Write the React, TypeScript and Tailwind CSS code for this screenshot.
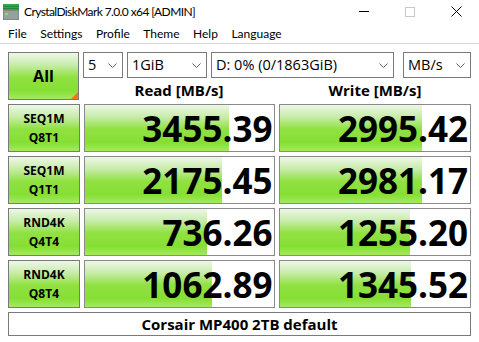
import React from "react";

const rows = [
  { l1: "SEQ1M", l2: "Q8T1", read: "3455.39", rw: 144, write: "2995.42", ww: 142 },
  { l1: "SEQ1M", l2: "Q1T1", read: "2175.45", rw: 137, write: "2981.17", ww: 142 },
  { l1: "RND4K", l2: "Q4T4", read: "736.26", rw: 122, write: "1255.20", ww: 130 },
  { l1: "RND4K", l2: "Q8T4", read: "1062.89", rw: 127, write: "1345.52", ww: 131 },
];

const menu = ["File", "Settings", "Profile", "Theme", "Help", "Language"];

function Chevron() {
  return (
    <svg width="9" height="5" viewBox="0 0 9 5" className="shrink-0">
      <path d="M0.5 0.5 L4.5 4.5 L8.5 0.5" fill="none" stroke="#606060" strokeWidth="1" />
    </svg>
  );
}

function Combo({ value, width }: { value: string; width: string }) {
  return (
    <div
      className={`${width} h-[26px] border border-[#7a7a7a] bg-white flex items-center justify-between pl-[4px] pr-[5px] text-[14.5px] text-black`}
    >
      <span className="leading-none whitespace-nowrap">{value}</span>
      <Chevron />
    </div>
  );
}

function AppIcon() {
  return (
    <svg width="16" height="16" viewBox="0 0 16 16">
      <rect x="0" y="0" width="16" height="6" fill="#2fa84f" />
      <rect x="0" y="2" width="16" height="1" fill="#1f8a3a" />
      <rect x="0" y="4" width="16" height="1" fill="#1f8a3a" />
      <rect x="0" y="6" width="16" height="10" fill="#7d8a86" />
      <rect x="1" y="7" width="14" height="8" fill="#95a19d" />
      <rect x="2" y="9" width="3" height="2" fill="#7fe07a" />
    </svg>
  );
}

const grad =
  "bg-[linear-gradient(to_bottom,#eef7e9_0%,#c4eba3_28%,#90e142_52%,#86df34_82%,#a4ea63_100%)]";

export default function App() {
  return (
    <div className="w-[479px] h-[342px] bg-white text-black overflow-hidden [font-family:'Open_Sans','Noto_Sans',sans-serif]">
      {/* title bar */}
      <div className="h-[23px] flex items-center [font-family:Lato,sans-serif]">
        <div className="ml-[3px] mt-[1px]">
          <AppIcon />
        </div>
        <span className="ml-[5px] text-[12px] tracking-[-0.6px] leading-none">CrystalDiskMark 7.0.0 x64 [ADMIN]</span>
        <div className="ml-auto flex items-center h-full">
          <div className="w-[46px] flex justify-center">
            <div className="w-[10px] h-px bg-black" />
          </div>
          <div className="w-[46px] flex justify-center">
            <div className="w-[10px] h-[10px] border border-[#c8c8c8]" />
          </div>
          <div className="w-[46px] flex justify-center">
            <svg width="11" height="11" viewBox="0 0 11 11">
              <path d="M0.5 0.5 L10.5 10.5 M10.5 0.5 L0.5 10.5" stroke="#000" strokeWidth="1" />
            </svg>
          </div>
        </div>
      </div>

      {/* menu */}
      <div className="h-[21px] flex items-center gap-[13.5px] pl-[8px] pt-[2px] border-b border-[#d6d6d6] text-[12px] leading-none [font-family:Lato,sans-serif]">
        {menu.map((m) => (
          <span key={m}>{m}</span>
        ))}
      </div>

      <div className="px-[8px] pt-[8px] flex flex-col gap-[4px]">
        {/* controls + headers */}
        <div className="flex gap-[4px]">
          <div className={`relative w-[72px] h-[48px] border border-[#7a7a7a] ${grad} flex items-center justify-center`}>
            <span className="text-[16px] font-bold leading-none">All</span>
            <div className="absolute right-0 bottom-0 w-0 h-0 border-l-[7px] border-l-transparent border-b-[7px] border-b-[#f07a10]" />
          </div>
          <div className="flex flex-col">
            <div className="flex h-[26px]">
              <Combo value="5" width="w-[40px]" />
              <div className="ml-[4px]">
                <Combo value="1GiB" width="w-[80px]" />
              </div>
              <div className="ml-[4px]">
                <Combo value="D: 0% (0/1863GiB)" width="w-[183px]" />
              </div>
              <div className="ml-[9px]">
                <Combo value="MB/s" width="w-[68px]" />
              </div>
            </div>
            <div className="flex gap-[4px] h-[22px] items-center">
              <div className="w-[192px] text-center text-[15px] font-bold leading-none pt-[3px]">Read [MB/s]</div>
              <div className="w-[192px] text-center text-[15px] font-bold leading-none pt-[3px]">Write [MB/s]</div>
            </div>
          </div>
        </div>

        {/* result rows */}
        {rows.map((r, i) => (
          <div key={i} className="flex gap-[4px] h-[48px]">
            <div className={`w-[72px] border border-[#7a7a7a] ${grad} flex flex-col items-center justify-center gap-[7px] text-[12px] font-bold leading-none`}>
              <span>{r.l1}</span>
              <span>{r.l2}</span>
            </div>
            <div
              className={`w-[192px] border border-[#8a8a8a] bg-white bg-no-repeat ${grad} flex items-center justify-end pr-[2px]`}
              style={{ backgroundSize: `${r.rw}px 100%` }}
            >
              <span className="text-[35px] font-bold leading-none">{r.read}</span>
            </div>
            <div
              className={`w-[192px] border border-[#8a8a8a] bg-white bg-no-repeat ${grad} flex items-center justify-end pr-[2px]`}
              style={{ backgroundSize: `${r.ww}px 100%` }}
            >
              <span className="text-[35px] font-bold leading-none">{r.write}</span>
            </div>
          </div>
        ))}

        {/* footer */}
        <div className="h-[24px] border border-[#7a7a7a] flex items-center justify-center">
          <span className="text-[15px] font-bold leading-none">Corsair MP400 2TB default</span>
        </div>
      </div>
    </div>
  );
}
